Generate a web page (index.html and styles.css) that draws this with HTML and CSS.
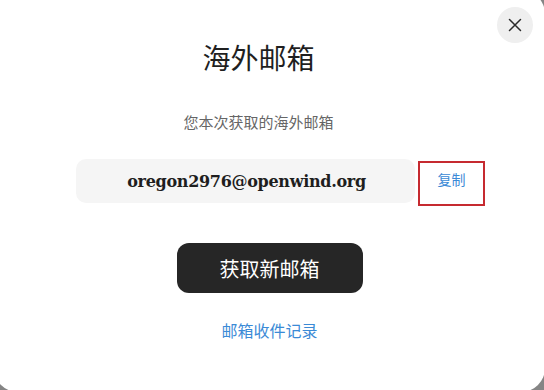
FILE: index.html
```html
<!DOCTYPE html>
<html lang="zh-CN">
<head>
<meta charset="utf-8">
<title>海外邮箱</title>
<link rel="stylesheet" href="styles.css">
</head>
<body>
<div class="modal">
  <button class="close" aria-label="关闭">
    <svg width="14" height="14" viewBox="0 0 14 14"><path d="M1.5 1.5 L12.5 12.5 M12.5 1.5 L1.5 12.5" stroke="#2b2b2b" stroke-width="1.5" stroke-linecap="round" fill="none"/></svg>
  </button>
  <h1 class="title">海外邮箱</h1>
  <p class="subtitle">您本次获取的海外邮箱</p>
  <div class="email-row">
    <div class="email-box">oregon2976@openwind.org</div>
    <div class="copy-box"><a class="copy" href="#">复制</a></div>
  </div>
  <button class="primary">获取新邮箱</button>
  <a class="history" href="#">邮箱收件记录</a>
</div>
</body>
</html>
```

FILE: styles.css
```css
html, body {
  margin: 0;
  padding: 0;
}
body {
  width: 544px;
  height: 390px;
  overflow: hidden;
  background: #858585;
  font-family: "Noto Sans CJK SC", "Noto Sans", sans-serif;
}
.modal {
  position: relative;
  box-sizing: border-box;
  width: 551px;
  height: 402px;
  margin: -10px 0 0 -6px;
  background: #ffffff;
  border-radius: 24px;
  display: flex;
  flex-direction: column;
  align-items: center;
  padding-top: 47px;
}
.close {
  position: absolute;
  top: 17px;
  right: 12px;
  width: 36px;
  height: 36px;
  border: none;
  border-radius: 50%;
  background: #efefef;
  padding: 0;
  display: flex;
  align-items: center;
  justify-content: center;
}
.title {
  margin: 0 22px 0 0;
  font-size: 28px;
  line-height: 40px;
  font-weight: 400;
  color: #1f1f1f;
}
.subtitle {
  margin: 35px 22px 0 0;
  font-size: 15px;
  line-height: 20px;
  color: #666666;
}
.email-row {
  margin: 27px 0 0 22px;
  display: flex;
  align-items: flex-start;
  gap: 3px;
}
.email-box {
  width: 339px;
  height: 44px;
  box-sizing: border-box;
  background: #f5f5f5;
  border-radius: 10px;
  display: flex;
  align-items: center;
  justify-content: center;
  padding-left: 2px;
  font-family: "DejaVu Serif", "Liberation Serif", serif;
  font-weight: 700;
  font-size: 16px;
  letter-spacing: -0.3px;
  color: #1e1e1e;
}
.copy-box {
  margin-top: 2px;
  width: 67px;
  height: 45px;
  box-sizing: border-box;
  border: 2px solid #c62a30;
  padding-top: 3px;
  text-align: center;
}
.copy {
  font-size: 14px;
  line-height: 20px;
  color: #3b8ad6;
  text-decoration: none;
}
.primary {
  margin-top: 37px;
  width: 186px;
  height: 50px;
  border: none;
  border-radius: 12px;
  background: #262626;
  color: #ffffff;
  font-family: "Noto Sans CJK SC", "Noto Sans", sans-serif;
  font-size: 20px;
  padding: 0;
}
.history {
  margin-top: 27px;
  font-size: 16px;
  line-height: 20px;
  color: #3b8ad6;
  text-decoration: none;
}
```
